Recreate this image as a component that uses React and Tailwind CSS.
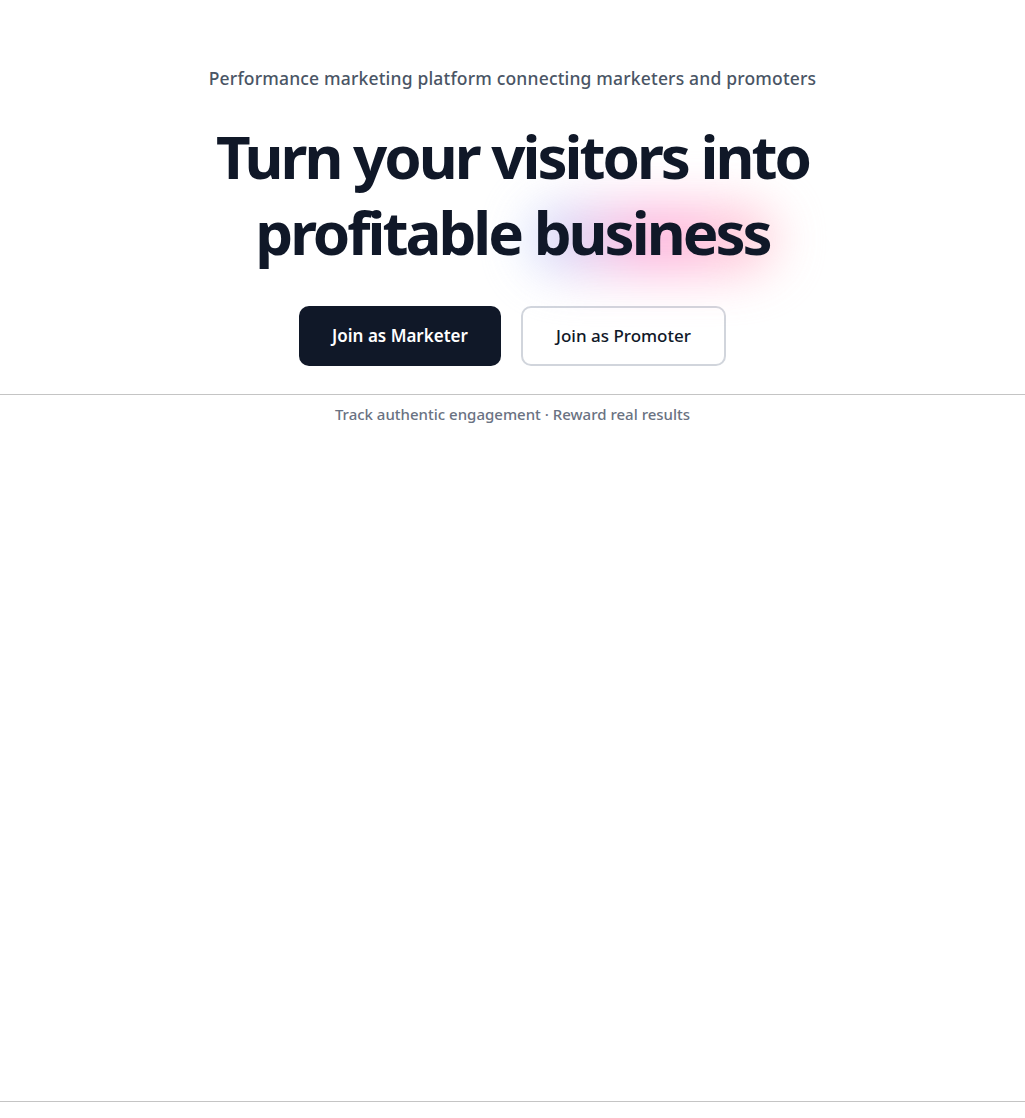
export default function App() {
  return (
    <div className="min-h-[1118px] bg-white text-gray-900" style={{ fontFamily: '"Noto Sans", "Open Sans", sans-serif' }}>
      <section className="flex flex-col items-center pt-[64px]">
        <p className="text-[17.5px] leading-7 font-medium text-gray-600 tracking-[0.01em]">
          Performance marketing platform connecting marketers and promoters
        </p>
        <h1 className="relative mt-[26px] text-center text-[60px] leading-[76px] font-bold tracking-[-0.05em] text-gray-900">
          <span
            aria-hidden
            className="absolute left-[312px] top-[86px] w-[250px] h-[70px] rounded-full blur-xl opacity-80 bg-gradient-to-r from-blue-200 via-pink-300 to-rose-200"
          />
          <span className="relative">Turn your visitors into</span>
          <br />
          <span className="relative">profitable business</span>
        </h1>
        <div className="mt-[36px] flex gap-5">
          <button className="h-[60px] w-[202px] rounded-[10px] bg-gray-900 text-white text-[17px] font-semibold">
            Join as Marketer
          </button>
          <button className="h-[60px] w-[205px] rounded-[10px] border-2 border-gray-300 bg-white text-gray-900 text-[17px] font-medium">
            Join as Promoter
          </button>
        </div>
      </section>
      <section className="mt-[28px] h-[708px] border-y border-[#c4c4c4]">
        <p className="pt-[7px] text-center text-[15px] leading-6 font-medium text-gray-500">
          Track authentic engagement · Reward real results
        </p>
      </section>
    </div>
  );
}
